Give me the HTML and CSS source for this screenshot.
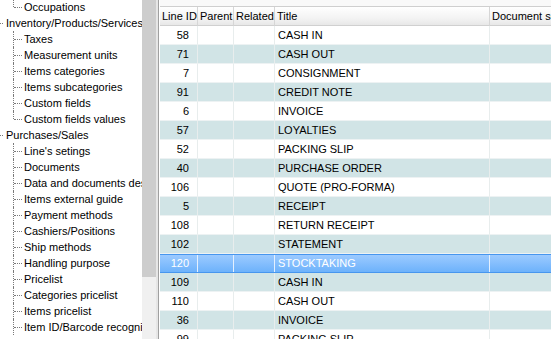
FILE: index.html
```html
<!DOCTYPE html>
<html lang="en">
<head>
    <meta charset="UTF-8">
    <title>Document lines</title>
    <link rel="stylesheet" href="styles.css">
</head>
<body>
    <div class="window">
        <div class="tree">
            <div class="node child last">Occupations</div>
            <div class="node root">Inventory/Products/Services</div>
            <div class="node child">Taxes</div>
            <div class="node child">Measurement units</div>
            <div class="node child">Items categories</div>
            <div class="node child">Items subcategories</div>
            <div class="node child">Custom fields</div>
            <div class="node child last">Custom fields values</div>
            <div class="node root">Purchases/Sales</div>
            <div class="node child">Line's setings</div>
            <div class="node child">Documents</div>
            <div class="node child">Data and documents descriptions</div>
            <div class="node child">Items external guide</div>
            <div class="node child">Payment methods</div>
            <div class="node child">Cashiers/Positions</div>
            <div class="node child">Ship methods</div>
            <div class="node child">Handling purpose</div>
            <div class="node child">Pricelist</div>
            <div class="node child">Categories pricelist</div>
            <div class="node child">Items pricelist</div>
            <div class="node child">Item ID/Barcode recognition</div>
        </div>

        <div class="scrollbar">
            <div class="thumb"></div>
        </div>
        <div class="splitter"></div>

        <div class="content">
            <div class="topstrip"></div>
            <div class="grid">
                <div class="row head">
                    <div class="cell">Line ID</div>
                    <div class="cell">Parent</div>
                    <div class="cell">Related</div>
                    <div class="cell">Title</div>
                    <div class="cell">Document series</div>
                </div>
                <div id="rows"></div>
            </div>
        </div>
    </div>

    <script>
        // Lines shown in the grid
        const lines = [
            [58, "CASH IN"],
            [71, "CASH OUT"],
            [7, "CONSIGNMENT"],
            [91, "CREDIT NOTE"],
            [6, "INVOICE"],
            [57, "LOYALTIES"],
            [52, "PACKING SLIP"],
            [40, "PURCHASE ORDER"],
            [106, "QUOTE (PRO-FORMA)"],
            [5, "RECEIPT"],
            [108, "RETURN RECEIPT"],
            [102, "STATEMENT"],
            [120, "STOCKTAKING"],
            [109, "CASH IN"],
            [110, "CASH OUT"],
            [36, "INVOICE"],
            [99, "PACKING SLIP"]
        ];

        const selectedId = 120;
        const rowsDiv = document.getElementById("rows");

        lines.forEach((line, i) => {
            const row = document.createElement("div");
            row.className = "row" + (i % 2 ? " alt" : "");
            if (line[0] === selectedId) row.className = "row selected";
            row.innerHTML =
                '<div class="cell num">' + line[0] + '</div>' +
                '<div class="cell"></div>' +
                '<div class="cell"></div>' +
                '<div class="cell">' + line[1] + '</div>' +
                '<div class="cell"></div>';
            rowsDiv.appendChild(row);
        });
    </script>
</body>
</html>
```

FILE: styles.css
```css
body {
    margin: 0;
    padding: 0;
    font-family: "Liberation Sans", Arial, sans-serif;
    font-size: 11px;
    color: #000;
    background-color: #fff;
}

.window {
    display: flex;
    width: 551px;
    height: 339px;
    overflow: hidden;
}

/* left tree */
.tree {
    width: 142px;
    flex: none;
    overflow: hidden;
    margin-top: -1px;
    background-color: #fff;
}

.node {
    position: relative;
    height: 16px;
    line-height: 16px;
    white-space: nowrap;
}

.node.root {
    padding-left: 6px;
}

.node.child {
    padding-left: 24px;
}

.node.root::after {
    content: "";
    position: absolute;
    left: 0;
    top: 8px;
    width: 3px;
    border-top: 1px dotted #7a7a7a;
}

.node.child::before {
    content: "";
    position: absolute;
    left: 13px;
    top: 0;
    bottom: 0;
    border-left: 1px dotted #7a7a7a;
}

.node.child.last::before {
    bottom: 8px;
}

.node.child::after {
    content: "";
    position: absolute;
    left: 14px;
    top: 8px;
    width: 8px;
    border-top: 1px dotted #7a7a7a;
}

/* scrollbar and splitter */
.scrollbar {
    width: 14px;
    flex: none;
    background-color: #f0f0f0;
}

.thumb {
    height: 277px;
    background-color: #cdcdcd;
}

.splitter {
    width: 2px;
    flex: none;
    background-color: #e6e6e6;
}

/* grid */
.content {
    flex: 1;
    min-width: 0;
    border-left: 1px solid #a0a0a0;
    padding-left: 1px;
    overflow: hidden;
}

.topstrip {
    height: 6px;
    background-color: #f9f9f9;
}

.grid {
    width: 560px;
}

.row {
    display: grid;
    grid-template-columns: 38px 36px 41px 215px 1fr;
    height: 19px;
    background-color: #fff;
}

.row.alt {
    background-color: #d1e4e6;
}

.cell {
    box-sizing: border-box;
    border-right: 1px solid #e8eded;
    border-bottom: 1px solid #edf2f3;
    padding: 0 3px;
    line-height: 18px;
    white-space: nowrap;
    overflow: hidden;
}

.cell.num {
    text-align: right;
    padding-right: 8px;
}

.row.head {
    height: 20px;
    border-top: 1px solid #cfcfcf;
    box-sizing: border-box;
    background: linear-gradient(#ffffff, #f3f3f3 60%, #e6e6e6);
}

.row.head .cell {
    padding: 0 0 0 2px;
    border-right: 1px solid #d6d6d6;
    border-bottom: 1px solid #d0d0d0;
}

.row.selected {
    background: linear-gradient(#9ccaff, #6db2fb);
    border-top: 1px solid #4796ee;
    border-bottom: 1px solid #4796ee;
    box-sizing: border-box;
    color: #fff;
}

.row.selected .cell {
    border-right: 1px solid #e4f0fe;
    border-bottom: none;
    line-height: 17px;
}
```
